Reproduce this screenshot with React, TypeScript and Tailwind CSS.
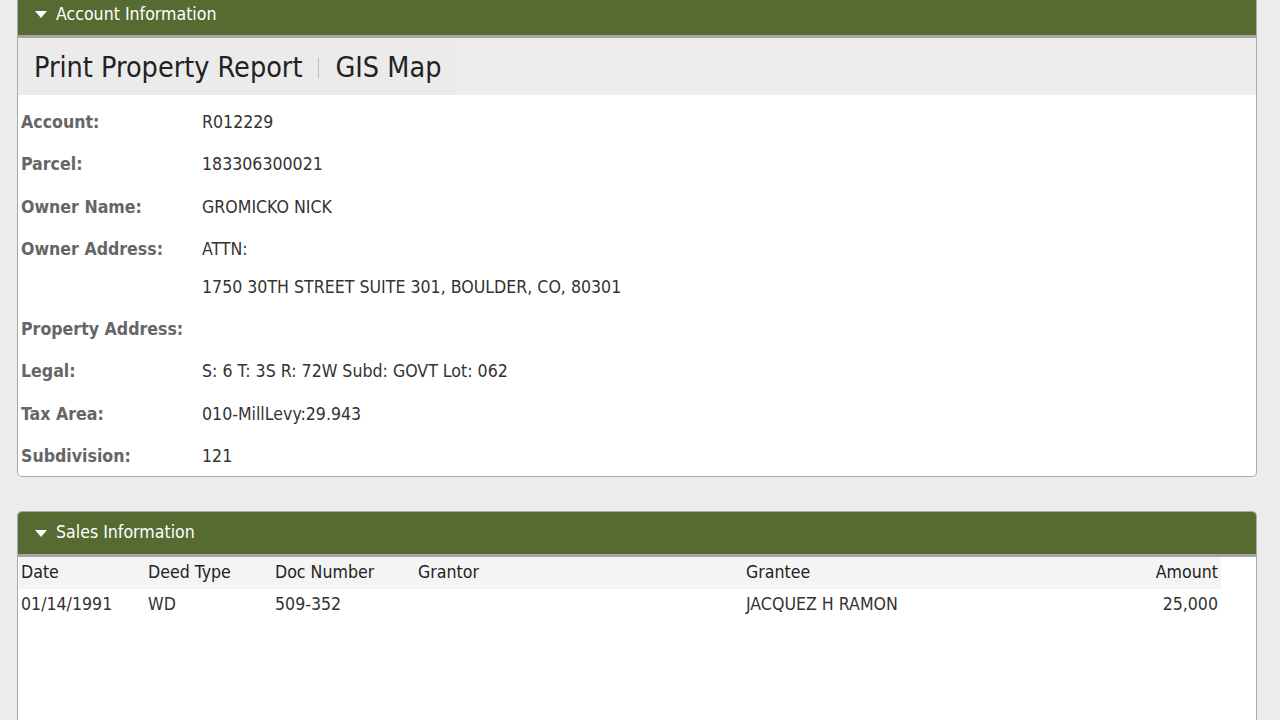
const font = { fontFamily: '"DejaVu Sans Condensed", "DejaVu Sans", sans-serif' };

const rows: { label: string; values: string[] }[] = [
  { label: "Account:", values: ["R012229"] },
  { label: "Parcel:", values: ["183306300021"] },
  { label: "Owner Name:", values: ["GROMICKO NICK"] },
  { label: "Owner Address:", values: ["ATTN:", "1750 30TH STREET SUITE 301, BOULDER, CO, 80301"] },
  { label: "Property Address:", values: [] },
  { label: "Legal:", values: ["S: 6 T: 3S R: 72W Subd: GOVT Lot: 062"] },
  { label: "Tax Area:", values: ["010-MillLevy:29.943"] },
  { label: "Subdivision:", values: ["121"] },
];

function PanelHeader({ title }: { title: string }) {
  return (
    <div className="flex h-[45px] items-center gap-[9px] border-b-[3px] border-[#a5a5a5] bg-[#566b31] pl-[17px] text-[17.6px] text-white">
      <svg width="12" height="7" viewBox="0 0 12 7" className="mt-[1px]">
        <path d="M0 0h12L6 7z" fill="#fff" />
      </svg>
      <span>{title}</span>
    </div>
  );
}

export default function App() {
  return (
    <div className="min-h-screen bg-[#ececec] pl-[17px] pr-[23px]" style={font}>
      <div className="-mt-[7px] overflow-hidden rounded-b-[5px] border border-t-0 border-[#a9a9a9] bg-white">
        <PanelHeader title="Account Information" />
        <div className="flex h-[57px] items-center bg-[#eeeeee]">
          <div className="flex h-full items-center bg-[#ebebeb] px-[16px] pt-[3px] text-[28.5px] text-[#222]">
            <span>Print Property Report</span>
            <span className="mx-[16px] h-[20px] w-px bg-[#bdbdbd]" />
            <span>GIS Map</span>
          </div>
        </div>
        <div className="pl-[3px] pt-[6px] text-[17.6px]">
          {rows.map((r, idx) => {
            const last = idx === rows.length - 1;
            return (
              <div key={r.label} className={last ? "-mb-[2px] flex" : "flex"}>
                <div className="w-[181px] shrink-0 py-[8px] font-bold text-[#666]">{r.label}</div>
                <div className="flex flex-col text-[#333]">
                  {r.values.length === 0 ? (
                    <div className="py-[8px]">&nbsp;</div>
                  ) : (
                    r.values.map((v, i) => (
                      <div key={i} className={i === 0 ? "py-[8px]" : "-mt-[5px] py-[8px]"}>
                        {v}
                      </div>
                    ))
                  )}
                </div>
              </div>
            );
          })}
        </div>
      </div>

      <div className="mt-[34px] h-[220px] overflow-hidden rounded-t-[5px] border border-b-0 border-[#a9a9a9] bg-white">
        <PanelHeader title="Sales Information" />
        <table className="ml-[1px] w-[1202px] border-collapse text-left text-[17.6px] text-[#333]">
          <thead>
            <tr className="h-[32px] bg-[#f4f4f4] text-[#222]">
              <th className="w-[129px] pl-[2px] font-normal">Date</th>
              <th className="w-[127px] font-normal">Deed Type</th>
              <th className="w-[143px] font-normal">Doc Number</th>
              <th className="w-[328px] font-normal">Grantor</th>
              <th className="font-normal">Grantee</th>
              <th className="pr-[3px] text-right font-normal">Amount</th>
            </tr>
          </thead>
          <tbody>
            <tr className="h-[32px]">
              <td className="pl-[2px]">01/14/1991</td>
              <td>WD</td>
              <td>509-352</td>
              <td></td>
              <td>JACQUEZ H RAMON</td>
              <td className="pr-[3px] text-right">25,000</td>
            </tr>
          </tbody>
        </table>
      </div>
    </div>
  );
}
